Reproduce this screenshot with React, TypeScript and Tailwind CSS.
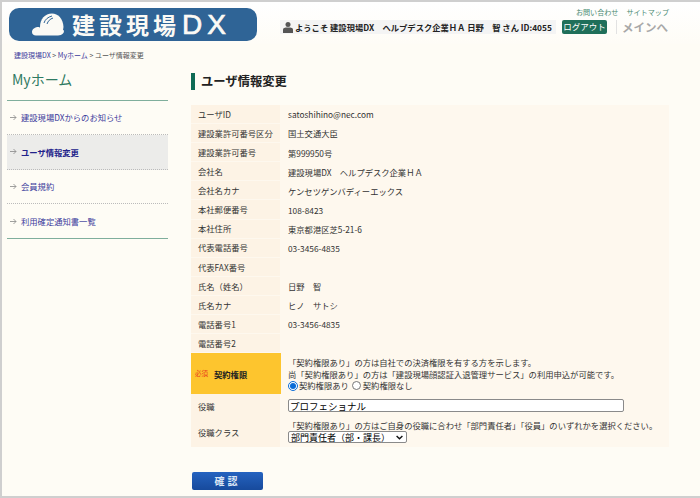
const jp = "font-['Noto_Sans_CJK_JP','Noto_Sans',sans-serif]";

const rows: [string, string][] = [
  ["ユーザID", "satoshihino@nec.com"],
  ["建設業許可番号区分", "国土交通大臣"],
  ["建設業許可番号", "第999950号"],
  ["会社名", "建設現場DX　ヘルプデスク企業ＨＡ"],
  ["会社名カナ", "ケンセツゲンバディーエックス"],
  ["本社郵便番号", "108-8423"],
  ["本社住所", "東京都港区芝5-21-6"],
  ["代表電話番号", "03-3456-4835"],
  ["代表FAX番号", ""],
  ["氏名（姓名）", "日野　智"],
  ["氏名カナ", "ヒノ　サトシ"],
  ["電話番号1", "03-3456-4835"],
  ["電話番号2", ""],
];

const menu = [
  { label: "建設現場DXからのお知らせ" },
  { label: "ユーザ情報変更", active: true },
  { label: "会員規約" },
  { label: "利用確定通知書一覧" },
];

function Helmet() {
  return (
    <svg width="32" height="23" viewBox="0 0 32 23" fill="#fbfaf5" className="shrink-0">
      <path d="M8 14C8 6 13 .5 20 .5c6 0 11 5 11.500 13.500L31 17H8z" />
      <path d="M0 19c0-3 3-5 7-5l4 3h20.500c.8 1 .5 2.500-.5 3.500-1 1.200-3 2-5 2H4c-2.500 0-4-1.500-4-3.500z" />
      <path d="M12 10c1-3.500 4-6 8-7M15 11c1-3 3-5 6-6" stroke="#2f6496" strokeWidth="1" fill="none" />
    </svg>
  );
}

function Arrow() {
  return (
    <svg width="7" height="7" viewBox="0 0 7 7" fill="none" stroke="#888" strokeWidth="0.8" className="shrink-0">
      <path d="M0 3.500h6M3.500 1l2.500 2.500L3.500 6" />
    </svg>
  );
}

export default function App() {
  return (
    <div className={`${jp} w-[700px] h-[498px] overflow-hidden border-t-2 border-l-2 border-b-2 border-[#cfcfcf] bg-[#fefcf5] text-[#333]`}>
      <header className="h-[42px] bg-gradient-to-b from-white to-[#fefcf6] flex items-start pl-[7px]">
        <div className="shrink-0 mt-[6px] w-[248px] h-[33px] rounded-[10px] bg-[#2f6496] flex items-center pl-[23px] gap-[8px]">
          <Helmet />
          <span className="flex items-center text-[#fbfaf5] leading-none whitespace-nowrap">
            <span className="font-bold text-[23px] tracking-[4px]">建設現場</span>
            <span className="ml-[2px] text-[28px] tracking-[5px] font-['Liberation_Sans',sans-serif] [-webkit-text-stroke:0.7px_#fbfaf5]">DX</span>
          </span>
        </div>
        <div className="shrink-0 ml-[23px] mt-[18px] h-[14px] w-[276px] bg-[#f4f4f4] flex items-center whitespace-nowrap">
          <svg width="10" height="11" viewBox="0 0 10 11" fill="#555" className="ml-[3px] mr-[2px] shrink-0">
            <circle cx="5" cy="2.600" r="2.500" />
            <path d="M0 11V7.500c0-1.500 1.500-2 5-2s5 .5 5 2V11z" />
          </svg>
          <span className="text-[8.300px] font-bold text-[#222] leading-none">ようこそ 建設現場DX　ヘルプデスク企業ＨＡ 日野　智 さん ID:4055</span>
        </div>
        <div className="shrink-0 ml-[6px] mt-[5px] flex flex-col w-[107px]">
          <div className="flex justify-end gap-[8px] text-[7.100px] leading-[10px] text-[#4a8a72] whitespace-nowrap">
            <span>お問い合わせ</span>
            <span>サイトマップ</span>
          </div>
          <div className="mt-[3px] flex items-center">
            <span className="shrink-0 w-[45px] h-[14px] bg-[#1f6f5a] rounded-[2px] text-white text-[8.500px] leading-[13px] text-center whitespace-nowrap">ログアウト</span>
            <span className="ml-[9px] pl-[5px] border-l border-[#e2e2e2] text-[11.500px] leading-[14px] font-bold text-[#a8a8a8] whitespace-nowrap">メインへ</span>
          </div>
        </div>
      </header>

      <div className="h-[18px] pl-[12px] pt-[6px] text-[7px] leading-[10px] text-[#555]">
        <span className="text-[#3b3b9c]">建設現場DX</span> &gt; <span className="text-[#3b3b9c]">Myホーム</span> &gt; ユーザ情報変更
      </div>

      <div className="flex">
        <aside className="w-[161px] ml-[5px] shrink-0">
          <div className="h-[38px] pl-[5px] pt-[6px] text-[14px] leading-[22px] text-[#2f7a62]">Myホーム</div>
          <nav className="border-t border-b border-[#7fae9c]">
            {menu.map((m, i) => (
              <div
                key={m.label}
                className={`h-[34.300px] pl-[3px] flex items-center gap-[3px] text-[8.300px] ${i < 3 ? "border-b border-dotted border-[#bbb]" : ""} ${m.active ? "bg-[#ececea] font-bold text-[#22228a]" : "text-[#3b3b9c]"}`}
              >
                <Arrow />
                <span className="pl-[1px]">{m.label}</span>
              </div>
            ))}
          </nav>
        </aside>

        <main className="ml-[23px] w-[478px]">
          <div className="h-[43px] pt-[11px] flex items-start">
            <span className="w-[4px] h-[17px] bg-[#0f6b55]" />
            <h1 className="ml-[6px] text-[12.300px] leading-[17px] font-bold text-[#222]">ユーザ情報変更</h1>
          </div>

          <div className="bg-[#fef8ee] text-[8.300px] text-[#333]">
            {rows.map(([label, value]) => (
              <div key={label} className="flex h-[19.100px] items-center">
                <div className="w-[89px] h-full bg-[#fdf3e5] pl-[7px] flex items-center border-b border-[#fef8ee] whitespace-nowrap">{label}</div>
                <div className="pl-[8px] whitespace-nowrap">{value}</div>
              </div>
            ))}
            <div className="flex h-[41px]">
              <div className="w-[90px] bg-[#fdc52e] flex items-center pl-[4px] gap-[6px] font-bold text-[#222]">
                <span className="text-[6.500px] font-normal text-[#e8401c]">必須</span>
                <span>契約権限</span>
              </div>
              <div className="pl-[7px] pt-[4px] leading-[11.500px] whitespace-nowrap">
                <div>「契約権限あり」の方は自社での決済権限を有する方を示します。</div>
                <div>尚「契約権限あり」の方は「建設現場顔認証入退管理サービス」の利用申込が可能です。</div>
                <div className="flex items-center">
                  <input type="radio" name="k" defaultChecked className="m-0 w-[10px] h-[10px] mr-[1px] accent-[#0a6cd6]" />
                  <span>契約権限あり</span>
                  <input type="radio" name="k" className="m-0 w-[9px] h-[9px] ml-[3px] mr-[2px]" />
                  <span>契約権限なし</span>
                </div>
              </div>
            </div>
            <div className="flex h-[23px]">
              <div className="w-[89px] bg-[#fdf3e5] pl-[7px] flex items-center">役職</div>
              <div className="pl-[8px] flex items-center">
                <input
                  defaultValue="プロフェショナル"
                  className="w-[336px] h-[13px] bg-white border border-[#8a8a8a] rounded-[2px] px-[1px] text-[9.500px] text-black outline-none"
                />
              </div>
            </div>
            <div className="flex h-[30px]">
              <div className="w-[89px] bg-[#fdf3e5] pl-[7px] flex items-center">役職クラス</div>
              <div className="pl-[8px] leading-[11px] whitespace-nowrap">
                <div className="pt-[3px]">「契約権限あり」の方はご自身の役職に合わせ「部門責任者」「役員」のいずれかを選択ください。</div>
                <div className="w-[119px] h-[12px] bg-white border border-[#8a8a8a] rounded-[2px] pl-[2px] pr-[3px] flex items-center justify-between text-[9px] leading-none text-black">
                  <span>部門責任者（部・課長）</span>
                  <svg width="7" height="5" viewBox="0 0 7 5" fill="none" stroke="#111" strokeWidth="1.400" className="shrink-0">
                    <path d="M.6 1l2.900 2.800L6.400 1" />
                  </svg>
                </div>
              </div>
            </div>
          </div>

          <button className="block mt-[25px] ml-[1px] w-[71px] h-[18px] rounded-[2px] bg-gradient-to-b from-[#2563c0] to-[#174a9c] text-[#dbe6f5] text-[10px] font-bold tracking-[3px] leading-none">
            確認
          </button>
        </main>
      </div>
    </div>
  );
}
